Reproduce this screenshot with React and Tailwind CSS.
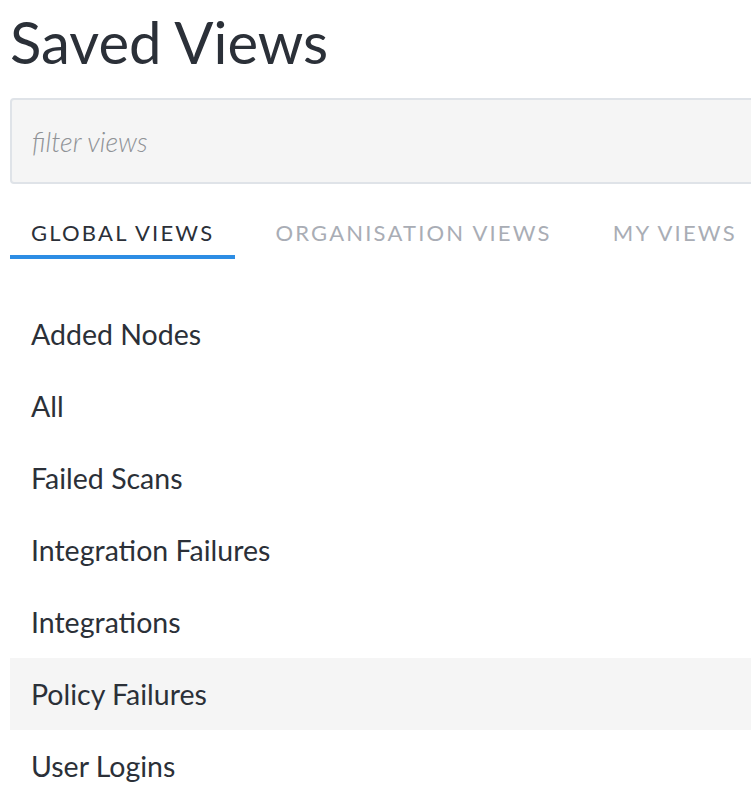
import { useState } from 'react';

const tabs = ['Global Views', 'Organisation Views', 'My Views'];

const globalViews = [
  'Added Nodes',
  'All',
  'Failed Scans',
  'Integration Failures',
  'Integrations',
  'Policy Failures',
  'User Logins',
];

export default function App() {
  const [activeTab, setActiveTab] = useState(0);
  const [hovered, setHovered] = useState('Policy Failures');

  return (
    <div className="w-[751px] h-[800px] overflow-hidden bg-white text-[#2b3038] font-['Lato',sans-serif]">
      <div className="w-[800px] pl-[10px]">
        {/* Header */}
        <h1 className="text-[58px] leading-none pt-[13px] pb-[27px] font-normal">Saved Views</h1>

        {/* Filter input */}
        <input
          type="text"
          placeholder="filter views"
          className="block w-full h-[86px] px-[20px] bg-[#f5f5f5] border-2 border-[#dfe3e8] rounded-[4px] text-[27px] font-light italic placeholder:text-[#8f9296] outline-none"
        />

        {/* Tabs */}
        <div className="flex gap-[19px] mt-[38px]">
          {tabs.map((tab, i) => (
            <button
              key={tab}
              onClick={() => setActiveTab(i)}
              className={`px-[21px] pb-[11px] border-b-4 uppercase text-[22px] tracking-[0.1em] leading-none ${
                activeTab === i
                  ? 'border-[#2d8de4] text-[#2b3038]'
                  : 'border-transparent text-[#a9adb5]'
              }`}
            >
              {tab}
            </button>
          ))}
        </div>

        {/* View list */}
        <ul className="mt-[39px]">
          {globalViews.map((view) => (
            <li
              key={view}
              onMouseEnter={() => setHovered(view)}
              className={`h-[72px] flex items-center px-[21px] text-[28.5px] ${
                hovered === view ? 'bg-[#f5f5f5]' : ''
              }`}
            >
              {view}
            </li>
          ))}
        </ul>
      </div>
    </div>
  );
}
